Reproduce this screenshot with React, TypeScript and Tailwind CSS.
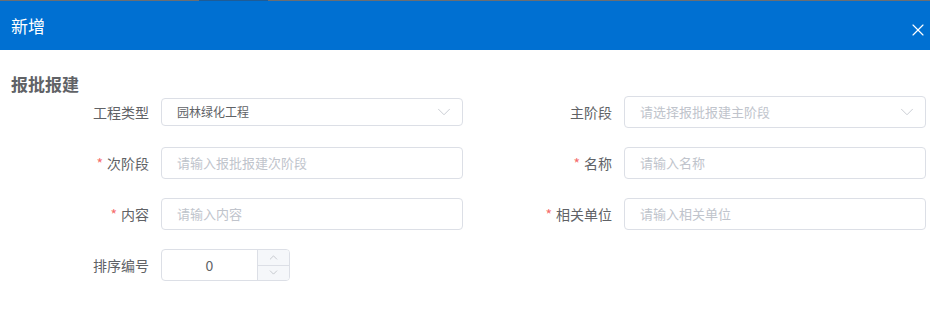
import { ChevronDown, ChevronUp, X } from 'lucide-react';

const font = { fontFamily: '"Noto Sans CJK SC", "Noto Sans", sans-serif' };

function Label({ text, required }: { text: string; required?: boolean }) {
  return (
    <div className="flex h-8 w-[161px] shrink-0 items-center justify-end pr-3 text-[14px] text-[#606266]">
      {required && <span className="mr-1 text-[#f56c6c]">*</span>}
      {text}
    </div>
  );
}

function TextInput({ placeholder }: { placeholder: string }) {
  return (
    <div className="flex h-8 w-[302px] items-center rounded-[4px] border border-[#dcdfe6] bg-white px-[15px] text-[13px] text-[#c0c4cc]">
      {placeholder}
    </div>
  );
}

function Field({ label, required, children }: { label: string; required?: boolean; children: React.ReactNode }) {
  return (
    <div className="flex h-8 items-center">
      <Label text={label} required={required} />
      {children}
    </div>
  );
}

export default function App() {
  return (
    <div className="flex h-[335px] w-[930px] flex-col bg-white" style={font}>
      <div className="flex h-px w-full bg-[#6b6e72]">
        <div className="ml-[199px] h-px w-[69px] bg-[#1f5c96]" />
      </div>
      <header className="flex h-[49px] items-center justify-between bg-[#0070d2] pl-[11px] pr-[2px]">
        <span className="text-[17px] text-white">新增</span>
        <X size={20} strokeWidth={1.4} className="mt-2 text-white" />
      </header>

      <div className="pl-[11px] pt-[22px] text-[17px] font-bold leading-6 text-[#606266]">报批报建</div>

      <div className="grid grid-cols-[463px_463px] gap-y-[19px]">
        <Field label="工程类型">
          <div className="flex h-7 w-[302px] items-center justify-between rounded-[4px] border border-[#dcdfe6] pl-[15px] pr-[7px] text-[12px] text-[#606266]">
            园林绿化工程
            <ChevronDown size={22} strokeWidth={0.9} className="text-[#c0c4cc]" />
          </div>
        </Field>
        <Field label="主阶段">
          <div className="flex h-8 w-[302px] items-center justify-between rounded-[4px] border border-[#dcdfe6] pl-[15px] pr-[7px] text-[13px] text-[#c0c4cc]">
            请选择报批报建主阶段
            <ChevronDown size={22} strokeWidth={0.9} className="text-[#c0c4cc]" />
          </div>
        </Field>
        <Field label="次阶段" required>
          <TextInput placeholder="请输入报批报建次阶段" />
        </Field>
        <Field label="名称" required>
          <TextInput placeholder="请输入名称" />
        </Field>
        <Field label="内容" required>
          <TextInput placeholder="请输入内容" />
        </Field>
        <Field label="相关单位" required>
          <TextInput placeholder="请输入相关单位" />
        </Field>
        <Field label="排序编号">
          <div className="flex h-8 w-[129px] overflow-hidden rounded-[4px] border border-[#dcdfe6]">
            <div className="flex flex-1 items-center justify-center text-[14px] text-[#606266]">0</div>
            <div className="flex w-8 flex-col border-l border-[#dcdfe6] bg-[#f5f7fa]">
              <div className="flex flex-1 items-center justify-center border-b border-[#dcdfe6]">
                <ChevronUp size={13} strokeWidth={1.1} className="text-[#a8abb2]" />
              </div>
              <div className="flex flex-1 items-center justify-center">
                <ChevronDown size={13} strokeWidth={1.1} className="text-[#a8abb2]" />
              </div>
            </div>
          </div>
        </Field>
      </div>
    </div>
  );
}
